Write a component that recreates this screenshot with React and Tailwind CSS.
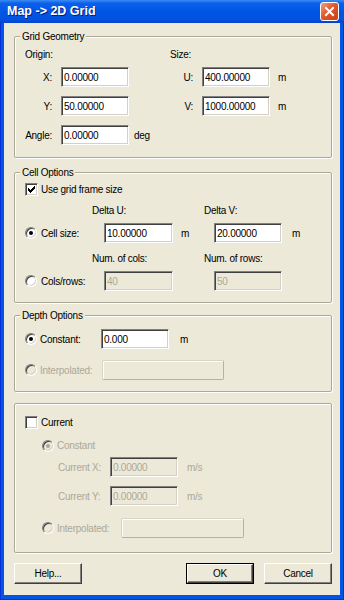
import React from "react";

const SUNKEN =
  "border border-t-[#808080] border-l-[#808080] border-b-white border-r-white shadow-[inset_1px_1px_0_#404040,inset_-1px_-1px_0_#D4D0C8]";

function Radio({ checked, disabled }) {
  return (
    <span
      className={`flex shrink-0 items-center justify-center w-[12px] h-[12px] rounded-full ${SUNKEN} ${
        disabled ? "bg-[#ECE9D8]" : "bg-white"
      }`}
    >
      {checked && (
        <span
          className={`w-[4px] h-[4px] rounded-full ${disabled ? "bg-[#ACA899]" : "bg-black"}`}
        />
      )}
    </span>
  );
}

function Check({ checked }) {
  return (
    <span className={`flex shrink-0 items-center justify-center w-[13px] h-[13px] bg-white ${SUNKEN}`}>
      {checked && (
        <svg width="7" height="7" viewBox="0 0 7 7" shapeRendering="crispEdges">
          <path d="M6 0h1v3h-1v1h-1v1h-1v1h-1v1h-1v-1h-1v-1h-1v-3h1v1h1v1h1v-1h1v-1h1z" fill="#000" />
        </svg>
      )}
    </span>
  );
}

function Field({ value, w, disabled }) {
  return (
    <div
      className={`flex shrink-0 items-center h-[20px] pl-[2px] ${w} ${SUNKEN} ${
        disabled ? "bg-[#ECE9D8] text-[#ACA899]" : "bg-white text-black"
      }`}
    >
      {value}
    </div>
  );
}

function DisabledBox({ w }) {
  return (
    <div
      className={`shrink-0 h-[20px] ${w} rounded-[2px] border border-t-[#D8D5C8] border-l-[#D8D5C8] border-b-[#B5B2A4] border-r-[#B5B2A4] bg-[#ECE9D8] shadow-[inset_1px_1px_0_#fff]`}
    />
  );
}

function Btn({ children, def }) {
  return (
    <div
      className={`flex w-[68px] h-[21px] bg-[#ECE9D8] ${def ? "border border-black" : ""}`}
    >
      <div className="flex flex-1 items-center justify-center border border-t-white border-l-white border-b-[#404040] border-r-[#404040] shadow-[inset_-1px_-1px_0_#808080]">
        {children}
      </div>
    </div>
  );
}

function Group({ label, className, children }) {
  return (
    <div
      className={`flex flex-col rounded-[2px] border border-[#ACA899] shadow-[inset_1px_1px_0_#fff,1px_1px_0_#fff] ${className}`}
    >
      {label && (
        <div className="-mt-[7px] ml-[5px] px-[2px] w-fit h-[13px] leading-[13px] bg-[#ECE9D8]">
          {label}
        </div>
      )}
      {children}
    </div>
  );
}

const DIS = "text-[#ACA899]";

export default function App() {
  return (
    <div className="w-[344px] h-[600px] flex flex-col bg-[#0055E5] shadow-[inset_1px_0_0_#0831D9,inset_-1px_0_0_#0831D9,inset_0_-1px_0_#0831D9] font-['Liberation_Sans',Arial,sans-serif] text-[10px] tracking-[-0.25px] leading-[13px] text-black">
      {/* Title bar */}
      <div className="h-[23px] shrink-0 flex items-center justify-between pl-[7px] pr-[5px] bg-[linear-gradient(to_bottom,#3C8CF4_0%,#0B60EA_14%,#0055E5_50%,#0252DF_86%,#0840C8_100%)]">
        <span className="text-white font-bold text-[12.5px] tracking-normal [text-shadow:1px_1px_0_#0A1883]">
          Map -&gt; 2D Grid
        </span>
        <div className="w-[19px] h-[19px] rounded-[3px] border border-white bg-[linear-gradient(135deg,#F0A283_0%,#E2582C_45%,#C8401A_100%)] flex items-center justify-center">
          <svg width="11" height="11" viewBox="0 0 11 11">
            <path d="M2 2 L9 9 M9 2 L2 9" stroke="#fff" strokeWidth="2" strokeLinecap="square" />
          </svg>
        </div>
      </div>

      {/* Client area */}
      <div className="flex-1 flex flex-col mx-[4px] mb-[5px] bg-[#ECE9D8] pl-[10px] pr-[8px]">
        {/* Grid Geometry */}
        <Group label="Grid Geometry" className="mt-[13px] pb-[12px]">
          <div className="flex h-[13px] mt-[5px] pl-[10px] items-center">
            <span className="w-[145px]">Origin:</span>
            <span>Size:</span>
          </div>
          <div className="flex items-center h-[20px] mt-[6px]">
            <span className="w-[46px] pr-[9px] text-right">X:</span>
            <Field value="0.00000" w="w-[68px]" />
            <span className="w-[73px] pr-[9px] text-right">U:</span>
            <Field value="400.00000" w="w-[68px]" />
            <span className="ml-[8px]">m</span>
          </div>
          <div className="flex items-center h-[20px] mt-[9px]">
            <span className="w-[46px] pr-[9px] text-right">Y:</span>
            <Field value="50.00000" w="w-[68px]" />
            <span className="w-[73px] pr-[9px] text-right">V:</span>
            <Field value="1000.00000" w="w-[68px]" />
            <span className="ml-[8px]">m</span>
          </div>
          <div className="flex items-center h-[20px] mt-[9px]">
            <span className="w-[46px] pr-[9px] text-right">Angle:</span>
            <Field value="0.00000" w="w-[68px]" />
            <span className="ml-[5px]">deg</span>
          </div>
        </Group>

        {/* Cell Options */}
        <Group label="Cell Options" className="mt-[14px] pb-[11px]">
          <div className="flex items-center h-[13px] mt-[4px] pl-[10px]">
            <Check checked />
            <span className="ml-[3px]">Use grid frame size</span>
          </div>
          <div className="flex items-center h-[13px] mt-[8px] pl-[77px]">
            <span className="w-[112px]">Delta U:</span>
            <span>Delta V:</span>
          </div>
          <div className="flex items-center h-[20px] mt-[6px] pl-[10px]">
            <Radio checked />
            <span className="ml-[4px] w-[63px]">Cell size:</span>
            <Field value="10.00000" w="w-[69px]" />
            <span className="ml-[8px] w-[33px]">m</span>
            <Field value="20.00000" w="w-[68px]" />
            <span className="ml-[10px]">m</span>
          </div>
          <div className="flex items-center h-[13px] mt-[9px] pl-[77px]">
            <span className="w-[112px]">Num. of cols:</span>
            <span>Num. of rows:</span>
          </div>
          <div className="flex items-center h-[20px] mt-[6px] pl-[10px]">
            <Radio />
            <span className="ml-[4px] w-[63px]">Cols/rows:</span>
            <Field value="40" w="w-[69px]" disabled />
            <span className="ml-[8px] w-[33px]" />
            <Field value="50" w="w-[68px]" disabled />
          </div>
        </Group>

        {/* Depth Options */}
        <Group label="Depth Options" className="mt-[12px] pb-[11px]">
          <div className="flex items-center h-[20px] mt-[7px] pl-[10px]">
            <Radio checked />
            <span className="ml-[3px] w-[61px]">Constant:</span>
            <Field value="0.000" w="w-[68px]" />
            <span className="ml-[11px]">m</span>
          </div>
          <div className="flex items-center h-[20px] mt-[11px] pl-[10px]">
            <Radio disabled />
            <span className={`ml-[3px] w-[62px] ${DIS}`}>Interpolated:</span>
            <DisabledBox w="w-[122px]" />
          </div>
        </Group>

        {/* Current */}
        <Group className="mt-[11px] pb-[14px]">
          <div className="flex items-center h-[13px] mt-[12px] pl-[10px]">
            <Check />
            <span className="ml-[3px]">Current</span>
          </div>
          <div className="flex items-center h-[13px] mt-[10px] pl-[27px]">
            <Radio checked disabled />
            <span className={`ml-[3px] ${DIS}`}>Constant</span>
          </div>
          <div className="flex items-center h-[20px] mt-[5px] pl-[43px]">
            <span className={`w-[52px] ${DIS}`}>Current X:</span>
            <Field value="0.00000" w="w-[68px]" disabled />
            <span className={`ml-[9px] ${DIS}`}>m/s</span>
          </div>
          <div className="flex items-center h-[20px] mt-[9px] pl-[43px]">
            <span className={`w-[52px] ${DIS}`}>Current Y:</span>
            <Field value="0.00000" w="w-[68px]" disabled />
            <span className={`ml-[9px] ${DIS}`}>m/s</span>
          </div>
          <div className="flex items-center h-[20px] mt-[12px] pl-[27px]">
            <Radio disabled />
            <span className={`ml-[3px] w-[64px] ${DIS}`}>Interpolated:</span>
            <DisabledBox w="w-[123px]" />
          </div>
        </Group>

        {/* Buttons */}
        <div className="flex items-center justify-between mt-[10px]">
          <Btn>Help...</Btn>
          <div className="flex gap-[10px]">
            <Btn def>OK</Btn>
            <Btn>Cancel</Btn>
          </div>
        </div>
      </div>
    </div>
  );
}
